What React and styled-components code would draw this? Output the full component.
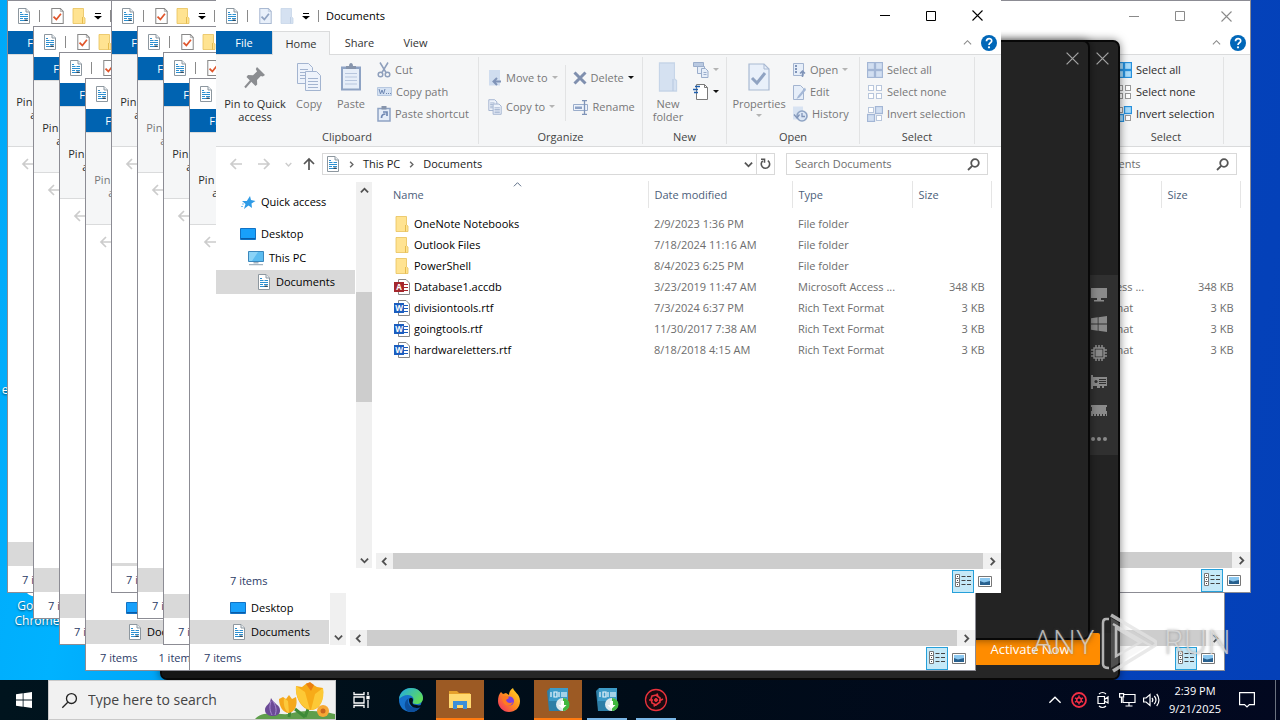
import React from "react";
import styled, { createGlobalStyle, css } from "styled-components";

const GlobalStyle = createGlobalStyle`
  * {
    box-sizing: border-box;
  }
  body {
    margin: 0;
    overflow: hidden;
    font-family: "Open Sans", "Noto Sans", sans-serif;
    font-size: 11px;
    line-height: 16px;
    color: #1a1a1a;
  }
  button, input {
    font: inherit;
    color: inherit;
    border: 0;
    padding: 0;
    background: transparent;
  }
  svg {
    display: block;
    flex: none;
  }
`;

/* ---------- desktop ---------- */

const Screen = styled.div`
  height: 100vh;
  display: grid;
  grid-template-rows: 1fr 40px;
`;

const Desktop = styled.main`
  position: relative;
  overflow: hidden;
  background: linear-gradient(100deg, #00a8f8 0%, #00b2ff 12%, #0078e0 50%, #0442ba 88%, #0440b8 100%);
`;

const Shortcut = styled.button`
  position: absolute;
  left: ${(p) => p.$x}px;
  top: ${(p) => p.$y}px;
  width: 74px;
  display: flex;
  flex-direction: column;
  align-items: center;
  line-height: 15px;
  font-size: 12px;
  color: #fff;
  text-shadow: 0 1px 2px rgba(0, 0, 0, 0.6);
`;

/* ---------- explorer window ---------- */

const Frame = styled.section`
  position: absolute;
  left: ${(p) => p.$x}px;
  top: ${(p) => p.$y}px;
  width: 785px;
  height: ${(p) => (p.$front ? 593 : 591)}px;
  display: flex;
  flex-direction: column;
  background: #fff;
  box-shadow: ${(p) => (p.$front ? "none" : "0 0 0 1px #8c8c94")};
`;

const TitleBar = styled.header`
  height: ${(p) => (p.$front ? 31 : 30)}px;
  flex: none;
  display: flex;
  align-items: center;
  padding: 0 1px 0 9px;
`;

const QuickTools = styled.div`
  display: flex;
  align-items: center;
  gap: 8px;
`;

const Bar = styled.span`
  width: 1px;
  height: 12px;
  margin-right: ${(p) => (p.$wide ? 3 : 0)}px;
  background: #8a8a8a;
`;

const Title = styled.h1`
  margin: 0 0 0 7px;
  font-size: 11px;
  font-weight: 400;
  color: #000;
`;

const Caption = styled.div`
  margin-left: auto;
  display: flex;
`;

const CaptionButton = styled.button`
  width: 46px;
  height: 30px;
  display: grid;
  place-items: center;
  color: ${(p) => (p.$active ? "#000" : "#8a8a8a")};
`;

const Tabs = styled.nav`
  height: 24px;
  flex: none;
  display: flex;
  align-items: stretch;
  border-bottom: 1px solid #dadbdc;
`;

const Tab = styled.button`
  width: ${(p) => p.$width || 56}px;
  color: #333;
  ${(p) =>
    p.$file &&
    css`
      background: #0063b1;
      color: #fff;
    `}
  ${(p) =>
    p.$current &&
    css`
      background: #f5f6f7;
      border: 1px solid #dadbdc;
      border-bottom: 0;
      margin-bottom: -1px;
    `}
`;

const TabTools = styled.div`
  margin-left: auto;
  padding-right: 4px;
  display: flex;
  align-items: center;
  gap: 9px;
  color: #888;
`;

const Ribbon = styled.div`
  height: 92px;
  flex: none;
  display: flex;
  background: #f5f6f7;
  border-bottom: 1px solid #dadbdc;
`;

const Group = styled.div`
  width: ${(p) => p.$width}px;
  margin: 2px 0;
  border-right: 1px solid #e2e3e4;
  display: flex;
  flex-direction: column;
`;

const GroupBody = styled.div`
  flex: 1;
  min-height: 0;
  display: flex;
  padding-left: ${(p) => p.$pad || 0}px;
`;

const GroupName = styled.div`
  height: 14px;
  line-height: 14px;
  text-align: center;
  color: #444;
`;

const BigButton = styled.button`
  width: ${(p) => p.$width}px;
  padding-top: 4px;
  display: flex;
  flex-direction: column;
  align-items: center;
  align-self: flex-start;
  gap: 4px;
  line-height: 13px;
  color: ${(p) => (p.$on ? "#2b2b2b" : "#777")};
`;

const BigIcon = styled.span`
  height: 32px;
  display: grid;
  place-items: center;
`;

const Stack = styled.div`
  display: flex;
  flex-direction: column;
  padding-top: ${(p) => p.$top || 2}px;
  padding-left: ${(p) => p.$left || 0}px;
  gap: ${(p) => p.$gap || 0}px;
`;

const SmallButton = styled.button`
  height: 22px;
  display: flex;
  align-items: center;
  gap: 4px;
  white-space: nowrap;
  color: ${(p) => (p.$on ? "#2b2b2b" : "#777")};
`;

const Divider = styled.span`
  width: 1px;
  height: 56px;
  margin: 8px 0 0 7px;
  background: #e2e3e4;
`;

const AddressRow = styled.div`
  height: 34px;
  flex: none;
  display: flex;
  align-items: center;
  padding: 0 13px;
`;

const NavButton = styled.button`
  width: ${(p) => p.$width || 28}px;
  display: flex;
  margin-left: ${(p) => (p.$end ? "auto" : 0)};
  color: ${(p) => (p.$on ? "#555" : "#ccc")};
`;

const AddressBox = styled.div`
  flex: 1;
  height: 22px;
  display: flex;
  align-items: center;
  border: 1px solid #d9d9d9;
  padding-left: 3px;
  color: #1a1a1a;
`;

const Crumb = styled.a`
  color: inherit;
  text-decoration: none;
`;

const Separator = styled.span`
  width: 23px;
  display: grid;
  place-items: center;
  color: #666;
`;

const Refresh = styled.button`
  width: 18px;
  height: 20px;
  display: grid;
  place-items: center;
  border-left: 1px solid #d9d9d9;
  color: #555;
`;

const SearchBox = styled.label`
  width: 202px;
  height: 22px;
  margin-left: 11px;
  padding: 0 7px 0 8px;
  border: 1px solid #d9d9d9;
  display: flex;
  align-items: center;
  color: #555;

  input {
    flex: 1;
    min-width: 0;
    outline: 0;
  }
  input::placeholder {
    color: #6d6d6d;
    opacity: 1;
  }
`;

const Body = styled.div`
  flex: 1;
  min-height: 0;
  display: flex;
`;

const Tree = styled.nav`
  width: 139px;
  display: flex;
  flex-direction: column;
  justify-content: ${(p) => (p.$scrolled ? "flex-end" : "flex-start")};
  padding: ${(p) => (p.$scrolled ? "0 0 2px" : "9px 0 0")};
`;

const TreeItem = styled.button`
  height: 24px;
  flex: none;
  margin-bottom: ${(p) => (p.$spaced ? 8 : 0)}px;
  display: flex;
  align-items: center;
  gap: 5px;
  padding-left: ${(p) => p.$indent}px;
  background: ${(p) => (p.$selected ? "#d9d9d9" : "transparent")};
  color: #000;
`;

const RowEdge = styled.span`
  height: 3px;
  background: #d9d9d9;
`;

const VScroll = styled.div`
  width: 16px;
  margin: 1px 4px 1px 1px;
  display: grid;
  grid-template-rows: 16px 1fr 16px;
  justify-items: center;
  align-items: center;
  background: #f0f0f0;
  color: #505050;
`;

const VThumb = styled.span`
  width: 16px;
  height: 110px;
  align-self: start;
  margin-top: 94px;
  background: #cdcdcd;
`;

const ListPane = styled.div`
  flex: 1;
  min-width: 0;
  display: flex;
  flex-direction: column;
  justify-content: space-between;
`;

const FileTable = styled.table`
  width: 616px;
  table-layout: fixed;
  border-collapse: collapse;
  color: #6d6d6d;

  th {
    height: 27px;
    padding: 0 6px;
    text-align: left;
    font-weight: 400;
    color: #4c607a;
    border-right: 1px solid #e5e5e5;
  }
  td {
    height: 21px;
    padding: 0 7px 0 6px;
    white-space: nowrap;
  }
  th:first-child,
  td:first-child {
    padding-left: 17px;
  }
  td:first-child {
    color: #000;
  }
  td:last-child {
    text-align: right;
  }
  tbody::before {
    content: "";
    display: block;
    height: 5px;
  }
`;

const FileName = styled.div`
  display: flex;
  align-items: center;
  gap: 3px;
`;

const FileIcon = styled.span`
  width: 18px;
  display: grid;
  place-items: center;
`;

const SortMark = styled.span`
  float: right;
  margin: -7px 120px 0 0;
`;

const HScroll = styled.div`
  height: 16px;
  margin-top: auto;
  display: grid;
  grid-template-columns: 17px 1fr 18px;
  align-items: center;
  justify-items: center;
  background: #f0f0f0;
  color: #505050;
`;

const HThumb = styled.span`
  width: 100%;
  height: 16px;
  background: #cdcdcd;
`;

const StatusBar = styled.footer`
  height: 24px;
  flex: none;
  display: flex;
  align-items: center;
  gap: 21px;
  padding-left: 14px;
  color: #2b3a66;
`;

const ViewSwitch = styled.div`
  margin-left: auto;
  padding-right: 5px;
  display: flex;
  align-items: center;
`;

const ViewButton = styled.button`
  width: 22px;
  height: 23px;
  display: grid;
  place-items: center;
  border: 1px solid ${(p) => (p.$on ? "#26a0da" : "transparent")};
  background: ${(p) => (p.$on ? "#c5e9f8" : "transparent")};
`;

/* ---------- dark installer windows ---------- */

const DarkWindow = styled.section`
  position: absolute;
  left: ${(p) => p.$x}px;
  top: 40px;
  width: ${(p) => p.$width}px;
  height: ${(p) => p.$height}px;
  display: flex;
  flex-direction: column;
  overflow: hidden;
  background: #232323;
  border: 2px solid #080808;
  border-radius: 7px;
  box-shadow: 0 0 8px rgba(0, 0, 0, 0.5);
`;

const DarkHeader = styled.header`
  height: 32px;
  flex: none;
  display: flex;
  justify-content: flex-end;
  align-items: center;
  padding-right: 9px;
  color: #a0a0a0;
`;

const DarkBody = styled.div`
  flex: 1;
  display: flex;
  justify-content: flex-end;
  align-items: flex-start;
  padding-top: 201px;
`;

const DarkSide = styled.nav`
  width: 30px;
  height: 180px;
  padding: 12px 3px;
  display: flex;
  flex-direction: column;
  gap: 13px;
  background: #303030;
  color: #8a8a8a;
`;

const DarkFooter = styled.footer`
  height: 45px;
  display: flex;
  align-items: flex-start;
  padding-right: 18px;
  background: linear-gradient(90deg, #151515 138px, #262626 138px);
`;

const Activate = styled.button`
  width: 140px;
  height: 32px;
  margin-left: auto;
  border-radius: 2px;
  background: #ff8c00;
  color: #fff;
  font-size: 13px;
`;

const Watermark = styled.div`
  position: absolute;
  right: 49px;
  bottom: 6px;
  display: flex;
  align-items: center;
  gap: 7px;
  font-size: 33px;
  font-weight: 300;
  line-height: 64px;
  color: rgba(225, 225, 225, 0.75);
  text-shadow: 0 0 3px rgba(110, 110, 110, 0.6);
  pointer-events: none;
`;

/* ---------- taskbar ---------- */

const Taskbar = styled.footer`
  display: flex;
  background: linear-gradient(90deg, #00141e, #000c18 50%, #020820);
  color: #fff;
`;

const StartButton = styled.button`
  width: 48px;
  display: grid;
  place-items: center;
`;

const TaskSearch = styled.label`
  width: 288px;
  display: flex;
  align-items: center;
  padding-left: 12px;
  background: #f1f1f1;
  border: 1px solid #c9c9c9;
  color: #222;

  input {
    flex: 1;
    min-width: 0;
    margin-left: 10px;
    font-size: 14px;
    outline: 0;
  }
  input::placeholder {
    color: #444;
    opacity: 1;
  }
`;

const Tasks = styled.div`
  display: flex;
  gap: 1px;
`;

const TaskButton = styled.button`
  width: ${(p) => p.$width || 48}px;
  display: grid;
  place-items: center;
  background: ${(p) => (p.$alert ? "#9c5a24" : "transparent")};
  box-shadow: ${(p) => (p.$alert ? "inset 0 -2px #ff7a10" : "none")};
`;

const OpenTask = styled(TaskButton)`
  margin: 0 4px;
  width: 40px;
  box-shadow: inset 0 -2px #7ab6e6;
`;

const Tray = styled.div`
  margin-left: auto;
  display: flex;
  align-items: center;
`;

const TrayButton = styled.button`
  width: ${(p) => p.$width || 24}px;
  height: 40px;
  display: grid;
  place-items: center;
`;

const Clock = styled.time`
  width: 64px;
  text-align: center;
  line-height: 18px;
`;

const ShowDesktop = styled.button`
  width: 5px;
  height: 40px;
  margin-left: 8px;
  border-left: 1px solid #6b7280;
`;

/* ---------- icons ---------- */

const DocIcon = () => (
  <svg width="14" height="16" viewBox="0 0 14 16">
    <path d="M1.500.500h7.500l3.500 3.500v11.500h-11z" fill="#fff" stroke="#8d979f" />
    <path d="M9 .500v3.500h3.500" fill="#e8edf2" stroke="#8d979f" />
    <path d="M3 4.500h2M3 6.500h3.500M7.500 6.500h3.500M3 8.500h8M3 10.500h3M7 10.500h4M3 12.500h8" stroke="#2b8fd0" strokeWidth="1.200" />
    <path d="M7.500 11.500h3v1.500h-3z" fill="#344b5e" />
  </svg>
);

const CheckDoc = ({ on, big }) => (
  <svg width={big ? 22 : 13} height={big ? 28 : 16} viewBox="0 0 22 28">
    <path d="M1 1h15l5 5v21H1z" fill={on ? "#fff" : "#e9f0fa"} stroke={on ? "#888" : "#a9b9d2"} strokeWidth={big ? 1.200 : 1.800} />
    <path d="M16 1v5h5" fill="none" stroke={on ? "#888" : "#a9b9d2"} />
    <path d="M4 15l5 5 8-10" fill="none" stroke={on ? "#e0562c" : "#90a3c2"} strokeWidth="3" />
  </svg>
);

const FolderIcon = ({ tone = "yellow", big }) => {
  const blue = tone === "blue";
  return (
    <svg width={big ? 20 : 14} height={big ? 30 : 16} viewBox="0 0 14 16" preserveAspectRatio="none">
      <path d="M1 .5h10.500v8.500l1.500 1v5.500H1z" fill={blue ? "#d5e1f1" : "#ffe391"} stroke={blue ? "#c6d5e8" : "#e8c25a"} strokeWidth=".8" />
      <path d="M10.500 9v6.500" stroke={blue ? "#bacbe2" : "#e0b23c"} strokeWidth=".8" />
    </svg>
  );
};

const Caret = ({ on }) => (
  <svg width="6" height="4" viewBox="0 0 6 4">
    <path d="M0 0h6l-3 3z" fill={on ? "#111" : "#b4b4b4"} />
  </svg>
);

const ToolbarCaret = () => (
  <svg width="8" height="8" viewBox="0 0 8 8">
    <path d="M1 1h6v1H1zM0 4h8L4 7.500z" fill="#000" />
  </svg>
);

const Chevron = ({ turn = 0, size = 9, width = 2 }) => (
  <svg width={size} height={size} viewBox="0 0 10 10">
    <path d="M1 3l4 4 4-4" fill="none" stroke="currentColor" strokeWidth={width} transform={`rotate(${turn} 5 5)`} />
  </svg>
);

const Arrow = ({ turn = 0 }) => (
  <svg width="14" height="14" viewBox="0 0 14 14">
    <path d="M13 7H2M7 2L2 7l5 5" fill="none" stroke="currentColor" strokeWidth="1.700" transform={`rotate(${turn} 7 7)`} />
  </svg>
);

const CloseIcon = ({ size = 11 }) => (
  <svg width={size} height={size} viewBox="0 0 11 11">
    <path d="M.5.5l10 10M10.500.500l-10 10" stroke="currentColor" strokeWidth="1.100" />
  </svg>
);

const HelpIcon = () => (
  <svg width="16" height="16" viewBox="0 0 16 16">
    <circle cx="8" cy="8" r="8" fill="#0067b8" />
    <path d="M5.500 6.200c0-3.600 5.200-3.400 5.200-.3C10.700 7.800 8 7.800 8 10" fill="none" stroke="#fff" strokeWidth="1.700" />
    <circle cx="8" cy="12.300" r="1.100" fill="#fff" />
  </svg>
);

const PinIcon = () => (
  <svg width="24" height="28" viewBox="0 0 24 28">
    <path d="M14 4l8 8-2.200 1.500-2-.5-3.800 4 .2 4.500-1.700 1.500-9-9L5 12l5 .3L14 8.500l-1.200-2.500z" fill="#8b8d91" />
    <path d="M8.500 17L2 24.500" stroke="#8b8d91" strokeWidth="2" />
  </svg>
);

const CopyIcon = ({ small }) => (
  <svg width={small ? 14 : 26} height={small ? 16 : 28} viewBox="0 0 26 28">
    <g fill="#eef3fb" stroke="#a3b4d0" strokeWidth={small ? 1.800 : 1}>
      <path d="M1.500.500h11l4 4v16h-15z" />
      <path d="M4 6.500h8M4 9.500h5M4 12.500h5M4 15.500h5" />
      <path d="M9.500 8.500h11l4 4v15h-15z" />
      <path d="M12 15.500h10M12 18.500h10M12 21.500h10M12 24.500h10" />
    </g>
  </svg>
);

const PasteIcon = () => (
  <svg width="22" height="30" viewBox="0 0 22 30">
    <path d="M1 4.500h20v24H1z" fill="#8ea3c4" />
    <path d="M3 7h16v19.500H3z" fill="#e6eef9" />
    <path d="M5 11.500h12M5 15h12M5 18.500h12M5 22h12" stroke="#b7c6de" />
    <path d="M6 7V4h3c0-4 4-4 4 0h3v3z" fill="#8795ac" />
  </svg>
);

const CutIcon = () => (
  <svg width="14" height="16" viewBox="0 0 14 16" fill="none" stroke="#8e9fbc" strokeWidth="1.500">
    <path d="M3 .5l6 10M11 .5l-6 10" />
    <circle cx="3.500" cy="12.500" r="2.300" />
    <circle cx="10.500" cy="12.500" r="2.300" />
  </svg>
);

const PathIcon = () => (
  <svg width="15" height="10" viewBox="0 0 15 10">
    <path d="M.5.5h14v8H.5z" fill="#d5e2f3" stroke="#b7c8e0" />
    <path d="M2 2l1.500 5L5 3l1.500 4L8 2M9 6.500h1M11 6.500h1M13 6.500h1" fill="none" stroke="#6f88b3" />
  </svg>
);

const ShortcutIcon = () => (
  <svg width="14" height="16" viewBox="0 0 14 16">
    <path d="M1 2.500h12v12.500H1z" fill="#e6eef9" stroke="#8ea3c4" strokeWidth="1.500" />
    <path d="M4.500 0h5v3.500h-5z" fill="#8795ac" />
    <path d="M4.500 12c0-3 1-4 4-4M6 6h4v4" fill="none" stroke="#6f88b3" strokeWidth="1.700" />
  </svg>
);

const MoveIcon = () => (
  <svg width="14" height="16" viewBox="0 0 14 16">
    <path d="M1 0h11v15.500H1z" fill="#d0ddef" />
    <path d="M13 11.500H6M9 8l-3.500 3.500L9 15" fill="none" stroke="#8094b8" strokeWidth="2" />
  </svg>
);

const DeleteIcon = () => (
  <svg width="14" height="14" viewBox="0 0 14 14">
    <path d="M1.500 1.500l11 11M12.500 1.500l-11 11" stroke="#7f8fae" strokeWidth="3" />
  </svg>
);

const RenameIcon = () => (
  <svg width="16" height="15" viewBox="0 0 16 15">
    <path d="M.5 4.500h14v6H.5z" fill="#eef3fb" stroke="#9aadcb" />
    <path d="M2 6.500h7v2.500H2z" fill="#8da2c6" />
    <path d="M9 .5h5M9 14.500h5M11.500.500v14" stroke="#7f94b8" strokeWidth="1.300" />
  </svg>
);

const EasyIcon = () => (
  <svg width="16" height="16" viewBox="0 0 16 16" fill="#e6eef9" stroke="#9aadcb">
    <path d="M.5.5h10v4H.5z" fill="#b9c9e1" />
    <path d="M4.500 4.500h7v7h-7z" />
    <path d="M8.500 6.500h4l2.500 2.500v6.500H8.500zM10.500 10.500h3M10.500 12.500h3" />
  </svg>
);

const NewItemIcon = () => (
  <svg width="16" height="16" viewBox="0 0 16 16">
    <path d="M3.500.500h8l3 3v12h-11z" fill="#fff" stroke="#7a7a7a" />
    <path d="M11.500.500v3h3" fill="none" stroke="#7a7a7a" />
    <path d="M2 2.500h5M0 5.500h5M1 8.500h4" stroke="#1f5fae" strokeWidth="1.500" />
  </svg>
);

const OpenIcon = () => (
  <svg width="14" height="16" viewBox="0 0 14 16">
    <path d="M1.500 1.500h10v12h-10z" fill="#e6eef9" stroke="#a3b4d0" />
    <path d="M3 4h2M3 7h2M3 10h2" stroke="#8094b8" strokeWidth="2" />
    <path d="M10.500 15V9.500M8 11.500l2.500-2.500 2.500 2.500" fill="none" stroke="#8094b8" strokeWidth="1.500" />
  </svg>
);

const EditIcon = () => (
  <svg width="14" height="16" viewBox="0 0 14 16">
    <path d="M1.500 1.500h7l3 3v11h-10z" fill="#e6eef9" stroke="#a3b4d0" />
    <path d="M13 3.500l-7 8.500-1.500 3 3-1.500L14 6z" fill="#a5b8d6" />
  </svg>
);

const HistoryIcon = () => (
  <svg width="16" height="16" viewBox="0 0 16 16">
    <path d="M1 .5h10v13H1z" fill="#d8e3f2" />
    <circle cx="10" cy="10" r="5" fill="#dbe6f5" stroke="#8ea3c4" strokeWidth="1.600" />
    <path d="M10 7v3.500h3M2 8.500l3 3.500 2.500-3.500" fill="none" stroke="#8094b8" strokeWidth="1.300" />
  </svg>
);

const SelectIcon = ({ kind, on }) => {
  const line = on ? "#2690dc" : "#a3b6d5";
  const fill = on ? "#a8dcfb" : "#d2dff1";
  const blank = on ? "#999" : "#b8c6dc";
  const cells = [[0, 0], [1, 0], [0, 1], [1, 1]];
  return (
    <svg width="16" height="16" viewBox="0 0 16 16">
      {cells.map(([cx, cy]) => {
        const chosen = kind === "all" || (kind === "invert" && cx !== cy);
        const size = chosen ? 7 : 5;
        return (
          <rect
            key={`${cx}${cy}`}
            x={cx * 8 + (chosen ? 0.5 : 1.5)}
            y={cy * 8 + (chosen ? 0.5 : 1.5)}
            width={size}
            height={size}
            fill={chosen ? fill : "#fff"}
            stroke={chosen ? line : blank}
            strokeWidth={chosen ? 1.3 : 1}
          />
        );
      })}
    </svg>
  );
};

const RefreshIcon = () => (
  <svg width="11" height="12" viewBox="0 0 11 12" fill="none" stroke="currentColor" strokeWidth="1.600">
    <path d="M7.800 2.600a4.200 4.200 0 1 1-5 .2M1 1.200h3.500v3.500" />
  </svg>
);

const MagnifierIcon = ({ size = 13, width = 1.8 }) => (
  <svg width={size} height={size} viewBox="0 0 13 13" fill="none" stroke="currentColor" strokeWidth={width}>
    <circle cx="8" cy="5" r="3.800" />
    <path d="M5.200 7.800L1 12" />
  </svg>
);

const StarIcon = () => (
  <svg width="15" height="15" viewBox="0 0 15 15">
    <path d="M9 1l1 4 4.500 1-4 2.500.5 4.500-3.500-2.500L3 14l1.500-5L1 6h4.800z" fill="#2f9be6" />
    <path d="M1 9h2M0 11.500h2" stroke="#7cc0ee" />
  </svg>
);

const DesktopIcon = () => (
  <svg width="16" height="13" viewBox="0 0 16 13">
    <path d="M.5.5h15v11H.5z" fill="#18a0fb" stroke="#1272c4" />
    <path d="M1 10.500h14" stroke="#0a5ca8" />
  </svg>
);

const PcIcon = () => (
  <svg width="16" height="15" viewBox="0 0 16 15">
    <path d="M.5.5h15v10H.5z" fill="#5bbcf0" stroke="#3b87bc" />
    <path d="M1 1h9L4 10H1z" fill="#8ad3f7" />
    <path d="M5.500 11h5v1.500h-5zM1 13h14v1.300H1z" fill="#a3b3c0" />
  </svg>
);

const OfficeIcon = ({ color, letter }) => (
  <svg width="16" height="16" viewBox="0 0 16 16">
    <path d="M4.500.500H12l3.500 3.500v11.500h-11z" fill="#fff" stroke="#888" />
    <path d="M10 5.500h4M10 8.500h4M10 11.500h4" stroke={color} />
    <path d="M0 3h10v10H0z" fill={color} />
    <text x="5" y="11" textAnchor="middle" fontFamily="Open Sans, sans-serif" fontSize="8" fontWeight="700" fill="#fff">
      {letter}
    </text>
  </svg>
);

const DetailsIcon = () => (
  <svg width="17" height="14" viewBox="0 0 17 14">
    <path d="M.5.5h4v4h-4zM.5 4.500h4v4h-4zM.5 8.500h4v4h-4z" fill="#fff" stroke="#777" />
    <path d="M2 2.500h1M2 6.500h1M2 10.500h1M6.500 2.500h4M12 2.500h4M6.500 6.500h4M12 6.500h4M6.500 10.500h4M12 10.500h4" stroke="#444" />
  </svg>
);

const ThumbIcon = () => (
  <svg width="14" height="11" viewBox="0 0 14 11">
    <path d="M.5.5h13v10H.5z" fill="#fff" stroke="#777" />
    <path d="M2 2h10v7H2z" fill="#8cc8f0" />
    <path d="M2 5l4 1.500L12 5v4H2z" fill="#28608e" />
  </svg>
);

const WindowsIcon = () => (
  <svg width="16" height="16" viewBox="0 0 16 16" fill="currentColor">
    <path d="M0 2.300L6.700 1.300V7.600H0zM7.500 1.200L16 0v7.600H7.500zM0 8.400h6.700v6.300L0 13.700zM7.500 8.400H16V16l-8.500-1.200z" />
  </svg>
);

const MonitorIcon = () => (
  <svg width="16" height="16" viewBox="0 0 16 16" fill="currentColor">
    <path d="M0 1h16v10H0zM6 11h4v2h3v1.500H3V13h3z" />
  </svg>
);

const ChipIcon = () => (
  <svg width="16" height="16" viewBox="0 0 16 16">
    <path d="M3 3h10v10H3z" fill="none" stroke="currentColor" strokeWidth="1.500" />
    <path d="M4.500 4.500h7v7h-7z" fill="currentColor" />
    <path d="M5 0v3M8 0v3M11 0v3M5 13v3M8 13v3M11 13v3M0 5h3M0 8h3M0 11h3M13 5h3M13 8h3M13 11h3" stroke="currentColor" strokeWidth="1.500" />
  </svg>
);

const CardIcon = () => (
  <svg width="16" height="16" viewBox="0 0 16 16">
    <path d="M0 1h2v2h14v9h-3v2h-2v-2H9v2H6v-2H2v3H0z" fill="currentColor" />
    <path d="M8 5.500h7M8 7.500h7M8 9.500h7" stroke="#303030" />
    <circle cx="5" cy="7.500" r="1.600" fill="#303030" />
  </svg>
);

const RamIcon = () => (
  <svg width="16" height="16" viewBox="0 0 16 16" fill="currentColor">
    <path d="M0 2h16v2h-1v4h1v5h-1v-2h-1v2h-2v-2h-1v2H9v-2H8v2H6v-2H5v2H3v-2H2v2H0V8h1V4H0z" />
  </svg>
);

const DotsIcon = () => (
  <svg width="16" height="16" viewBox="0 0 16 16" fill="currentColor">
    <circle cx="2" cy="7" r="2" />
    <circle cx="8" cy="7" r="2" />
    <circle cx="14" cy="7" r="2" />
  </svg>
);

const PlayMark = () => (
  <svg width="56" height="64" viewBox="0 0 56 64" fill="none" stroke="currentColor" strokeWidth="3.500">
    <path d="M10 5L53 30.500c3 2 3 4 0 5.500L12 61" />
    <path d="M15 18v28l24-13.500zM8 9H5c-3 0-3 2-3 4v41c0 4 4 4 6 4M12 14L52 37" strokeWidth="2.500" />
    <path d="M10 8v50l42-25z" fill="currentColor" opacity=".3" stroke="none" />
  </svg>
);

const ChromeIcon = () => (
  <svg width="32" height="32" viewBox="0 0 32 32">
    <circle cx="16" cy="16" r="15" fill="#fff" />
    <path d="M16 16l8 13A15 15 0 0 1 14 31z" fill="#1a9c52" />
    <circle cx="16" cy="16" r="6" fill="#3b7df0" />
  </svg>
);

const Flowers = () => (
  <svg width="80" height="38" viewBox="0 0 80 38">
    <path d="M0 38c8-9 22-4 34-5 12-5 34-3 46 0v5z" fill="#5f9e4c" />
    <path d="M34 36l2-12M50 36l6-16M50 36l-10-8" stroke="#3e8a38" strokeWidth="3" />
    <path d="M10 29c0-5 5-5 6-12 3 6 9 7 9 12 1 8-15 8-15 0z" fill="#6b4a96" />
    <path d="M16 20c-2 6-1 10 1 14M18 20c3 5 4 9 2 14" stroke="#a88bd0" fill="none" />
    <path d="M24 18l4-2 3 2 3-4 3 4 4-2c2 8-1 15-7 16-6 0-10-7-10-14z" fill="#f5a81c" />
    <path d="M29 17l4 3 1 12c-4-2-6-8-5-15z" fill="#fcc93c" />
    <path d="M41 5l6 1 5-4 5 1 5 3 6 1c1 12-3 22-12 22-9 0-16-12-15-24z" fill="#f7ab18" />
    <path d="M41 5l9 6 5 18C46 26 40 16 41 5zM68 7l-8 6-4 16c9-1 14-10 12-22z" fill="#fdc936" />
    <path d="M51 3l4-2 4 3-3 6z" fill="#ea7f10" />
    <circle cx="68" cy="30" r="6" fill="#f7a735" />
    <circle cx="68" cy="30" r="2.500" fill="#c9661e" />
  </svg>
);

const TaskViewIcon = () => (
  <svg width="17" height="16" viewBox="0 0 17 16" fill="none" stroke="currentColor" strokeWidth="1.300">
    <path d="M1 0v2.500h10V0M1 16v-2.500h10V16M1 5h10v6H1zM15 0v3M15 8v8" />
    <path d="M14 4.500h2v2h-2z" fill="currentColor" />
  </svg>
);

const EdgeIcon = () => (
  <svg width="24" height="24" viewBox="0 0 24 24">
    <defs>
      <linearGradient id="edge-top" x1="0" y1="0" x2="1" y2="0.6">
        <stop offset="0" stopColor="#1fa8e8" />
        <stop offset="1" stopColor="#5fdc5a" />
      </linearGradient>
    </defs>
    <path d="M0 12C0 5 5 0 12 0c7 0 12 5 12 10l-3 9c-2 3-5 5-9 5C5 24 0 19 0 12z" fill="#1672cc" />
    <path d="M0 11C1 4 6 0 12 0c7 0 12 5 12 10 0 4-3 6-6.500 6-3 0-4-1-3.500-2 2-4-1-7-5-7-4 0-7 2-9 4z" fill="url(#edge-top)" />
    <path d="M9 13c0 6 6 8 13 5-2 4-6 6-10 6C7 24 5 19 6 15c1-4 4-5 6-5-2 0-3 1-3 3z" fill="#0d4f9c" />
    <path d="M10 12c0-3 4-3 4 0l-.5 3c0 1 2 2 4 2 3 1 5 0 6.500-1l-2 3c-6 3-12-1-12-7z" fill="#02101c" />
  </svg>
);

const ExplorerIcon = () => (
  <svg width="22" height="20" viewBox="0 0 22 20">
    <path d="M0 1h8l2 2h11v6H0z" fill="#e6a12c" />
    <path d="M0 4h22v14H0z" fill="#ffd970" />
    <path d="M4 11h14v8h-4v-4H8v4H4z" fill="#3d8fd8" />
  </svg>
);

const FirefoxIcon = () => (
  <svg width="24" height="24" viewBox="0 0 24 24">
    <defs>
      <linearGradient id="fox" x1="1" y1="0" x2="0" y2="1">
        <stop offset="0" stopColor="#ffe226" />
        <stop offset=".5" stopColor="#ff8a1e" />
        <stop offset="1" stopColor="#f0246e" />
      </linearGradient>
    </defs>
    <path d="M4 4l2 2 3-1 3 2c0-3 1-5 4-7 1 4 7 6 7 13s-5 11-11 11S1 19 1 13c0-4 1-7 3-9z" fill="url(#fox)" />
    <circle cx="12.500" cy="13" r="4.500" fill="#7a3fe0" />
    <path d="M5 9c3-2 6-1 7 1l-3 2c1 3 4 4 7 2-2 6-11 5-11-5z" fill="#ff7a22" />
  </svg>
);

const IobitIcon = () => (
  <svg width="24" height="24" viewBox="0 0 24 24">
    <path d="M1 3l3-3h18l-1 21-3 2H3z" fill="#2d7ea6" />
    <path d="M4 0h18v13H3z" fill="#3d9bc8" />
    <path d="M5 4v5M8 4h3v5H8zM13 4v5M16 4v5M18 4v5M20 4v5" stroke="#e9f6fc" fill="none" strokeWidth="1.200" />
    <circle cx="16.500" cy="16.500" r="6.500" fill="#dfe9ec" />
    <path d="M17 10a6.500 6.500 0 0 1 0 13z" fill="#41b83f" />
    <path d="M15 13h3v4h2.500L16.500 21 12.500 17H15z" fill="#fff" />
  </svg>
);

const RedIcon = () => (
  <svg width="24" height="24" viewBox="0 0 24 24" fill="none" stroke="#e8323c">
    <circle cx="12" cy="12" r="10.500" fill="#1a0a10" strokeWidth="1.300" />
    <path d="M8 8l4-1 4 3v4l-4 3-4-2-1-4zM5 12h4M13 5.500l1 3M10 18.500l1-3M15 13l4-2" strokeWidth="1.600" />
    <circle cx="12" cy="12" r="1.500" fill="#e8323c" />
  </svg>
);

const TrayRed = () => (
  <svg width="16" height="16" viewBox="0 0 16 16">
    <circle cx="8" cy="8" r="7" fill="none" stroke="#f02f45" strokeWidth="1.800" />
    <circle cx="8" cy="8" r="2.300" fill="none" stroke="#f02f45" strokeWidth="1.600" />
    <path d="M8 3.500v2M8 10.500v2M4 5.800l1.700 1M10.300 9.200l1.700 1M4 10.200l1.700-1M10.300 6.800l1.700-1" stroke="#f02f45" strokeWidth="1.500" />
  </svg>
);

const MeetIcon = () => (
  <svg width="12" height="16" viewBox="0 0 12 16" fill="none" stroke="currentColor" strokeWidth="1.200">
    <path d="M1 4.500h6.500v7H1zM7.500 7.500L11 5v6L7.500 9M2 2c2-1.800 5-1.800 7 0M2 14c2 1.800 5 1.800 7 0" />
  </svg>
);

const NetworkIcon = () => (
  <svg width="17" height="14" viewBox="0 0 17 14" fill="none" stroke="currentColor" strokeWidth="1.200">
    <path d="M5 1.500h11v8H4V5M10 9.500v3.500M6.500 13h7M.6.600h4v3.500h-4zM2.500 4v6" />
  </svg>
);

const VolumeIcon = () => (
  <svg width="17" height="14" viewBox="0 0 17 14" fill="none" stroke="currentColor" strokeWidth="1.200">
    <path d="M.6 5h2.500L7 1.500v11L3.100 9H.6zM9 5c1 1.200 1 2.800 0 4M11.300 3c2 2.400 2 5.600 0 8M13.700 1c3 3.500 3 8.500 0 12" />
  </svg>
);

const NoticeIcon = () => (
  <svg width="16" height="16" viewBox="0 0 16 16" fill="none" stroke="currentColor" strokeWidth="1.200">
    <path d="M.6.600h14.800v12h-5L8 15l-2.500-2.400H.6z" />
  </svg>
);

/* ---------- data ---------- */

const files = [
  { name: "OneNote Notebooks", date: "2/9/2023 1:36 PM", type: "File folder", size: "", kind: "folder" },
  { name: "Outlook Files", date: "7/18/2024 11:16 AM", type: "File folder", size: "", kind: "folder" },
  { name: "PowerShell", date: "8/4/2023 6:25 PM", type: "File folder", size: "", kind: "folder" },
  { name: "Database1.accdb", date: "3/23/2019 11:47 AM", type: "Microsoft Access ...", size: "348 KB", kind: "access" },
  { name: "divisiontools.rtf", date: "7/3/2024 6:37 PM", type: "Rich Text Format", size: "3 KB", kind: "word" },
  { name: "goingtools.rtf", date: "11/30/2017 7:38 AM", type: "Rich Text Format", size: "3 KB", kind: "word" },
  { name: "hardwareletters.rtf", date: "8/18/2018 4:15 AM", type: "Rich Text Format", size: "3 KB", kind: "word" },
];

const kindIcons = {
  folder: <FolderIcon />,
  access: <OfficeIcon color="#a4262c" letter="A" />,
  word: <OfficeIcon color="#1b5dbe" letter="W" />,
};

// stacked windows, back to front; only their left edges stay uncovered
const stackedWindows = [
  { x: 8, y: 1, pin: true },
  { x: 34, y: 27, pin: true },
  { x: 60, y: 53, pin: true },
  { x: 86, y: 79, pin: false, chosen: true, treeText: true },
  { x: 112, y: 1, pin: true, rowEdge: true },
  { x: 138, y: 27, pin: false },
  { x: 164, y: 53, pin: true },
  { x: 190, y: 79, pin: true, treeText: true },
];

/* ---------- parts ---------- */

const PinButton = ({ on }) => (
  <BigButton $width={70} $on={on}>
    <BigIcon><PinIcon /></BigIcon>
    <span>Pin to Quick<br />access</span>
  </BigButton>
);

const SelectGroup = ({ enabled }) => (
  <Group $width={115}>
    <GroupBody $pad={7}>
      <Stack>
        <SmallButton $on={enabled}><SelectIcon kind="all" on={enabled} />Select all</SmallButton>
        <SmallButton $on={enabled}><SelectIcon kind="none" on={enabled} />Select none</SmallButton>
        <SmallButton $on={enabled}><SelectIcon kind="invert" on={enabled} />Invert selection</SmallButton>
      </Stack>
    </GroupBody>
    <GroupName>Select</GroupName>
  </Group>
);

const FullRibbon = () => (
  <Ribbon>
    <Group $width={263}>
      <GroupBody $pad={4}>
        <PinButton on />
        <BigButton $width={38}>
          <BigIcon><CopyIcon /></BigIcon>
          Copy
        </BigButton>
        <BigButton $width={46}>
          <BigIcon><PasteIcon /></BigIcon>
          Paste
        </BigButton>
        <Stack $left={3}>
          <SmallButton><CutIcon />Cut</SmallButton>
          <SmallButton><PathIcon />Copy path</SmallButton>
          <SmallButton><ShortcutIcon />Paste shortcut</SmallButton>
        </Stack>
      </GroupBody>
      <GroupName>Clipboard</GroupName>
    </Group>
    <Group $width={164}>
      <GroupBody $pad={9}>
        <Stack $top={10} $gap={7}>
          <SmallButton><MoveIcon />Move to<Caret /></SmallButton>
          <SmallButton><CopyIcon small />Copy to<Caret /></SmallButton>
        </Stack>
        <Divider />
        <Stack $top={10} $gap={7} $left={7}>
          <SmallButton><DeleteIcon />Delete<Caret on /></SmallButton>
          <SmallButton><RenameIcon />Rename</SmallButton>
        </Stack>
      </GroupBody>
      <GroupName>Organize</GroupName>
    </Group>
    <Group $width={84}>
      <GroupBody $pad={4}>
        <BigButton $width={42}>
          <BigIcon><FolderIcon tone="blue" big /></BigIcon>
          <span>New<br />folder</span>
        </BigButton>
        <Stack $left={4}>
          <SmallButton aria-label="Easy access"><EasyIcon /><Caret /></SmallButton>
          <SmallButton aria-label="New item"><NewItemIcon /><Caret on /></SmallButton>
        </Stack>
      </GroupBody>
      <GroupName>New</GroupName>
    </Group>
    <Group $width={133}>
      <GroupBody $pad={4}>
        <BigButton $width={56}>
          <BigIcon><CheckDoc big /></BigIcon>
          Properties
          <Caret />
        </BigButton>
        <Stack $left={5}>
          <SmallButton><OpenIcon />Open<Caret /></SmallButton>
          <SmallButton><EditIcon />Edit</SmallButton>
          <SmallButton><HistoryIcon />History</SmallButton>
        </Stack>
      </GroupBody>
      <GroupName>Open</GroupName>
    </Group>
    <SelectGroup />
  </Ribbon>
);

const Columns = () => (
  <colgroup>
    <col style={{ width: 272 }} />
    <col style={{ width: 144 }} />
    <col style={{ width: 120 }} />
    <col />
  </colgroup>
);

const FileList = () => (
  <FileTable>
    <Columns />
    <thead>
      <tr>
        <th>
          Name
          <SortMark><Chevron turn={180} width={1} /></SortMark>
        </th>
        <th>Date modified</th>
        <th>Type</th>
        <th>Size</th>
      </tr>
    </thead>
    <tbody>
      {files.map((file) => (
        <tr key={file.name}>
          <td><FileName><FileIcon>{kindIcons[file.kind]}</FileIcon>{file.name}</FileName></td>
          <td>{file.date}</td>
          <td>{file.type}</td>
          <td>{file.size}</td>
        </tr>
      ))}
    </tbody>
  </FileTable>
);

// same columns, with the covered ones left empty
const CoveredFileList = () => (
  <FileTable>
    <Columns />
    <thead>
      <tr><th /><th /><th /><th>Size</th></tr>
    </thead>
    <tbody>
      {files.map((file) => (
        <tr key={file.name}>
          <td />
          <td />
          <td>{file.size && file.type}</td>
          <td>{file.size}</td>
        </tr>
      ))}
    </tbody>
  </FileTable>
);

const WindowButtons = ({ active }) => (
  <Caption>
    <CaptionButton $active={active} aria-label="Minimize">
      <svg width="10" height="1"><path d="M0 .5h10" stroke="currentColor" /></svg>
    </CaptionButton>
    <CaptionButton $active={active} aria-label="Maximize">
      <svg width="10" height="10"><path d="M.5.5h9v9h-9z" fill="none" stroke="currentColor" /></svg>
    </CaptionButton>
    <CaptionButton $active={active} aria-label="Close"><CloseIcon /></CaptionButton>
  </Caption>
);

const QuickBar = ({ front }) => (
  <QuickTools>
    <DocIcon />
    <Bar $wide />
    <CheckDoc on={!front} />
    <FolderIcon tone={front ? "blue" : "yellow"} />
    <ToolbarCaret />
    <Bar />
  </QuickTools>
);

const Help = () => (
  <TabTools>
    <Chevron turn={180} width={1.2} />
    <HelpIcon />
  </TabTools>
);

const Search = () => (
  <SearchBox>
    <input placeholder="Search Documents" aria-label="Search Documents" />
    <MagnifierIcon />
  </SearchBox>
);

const SideScroll = () => (
  <VScroll>
    <Chevron turn={180} />
    <VThumb />
    <Chevron />
  </VScroll>
);

const BottomScroll = () => (
  <HScroll>
    <Chevron turn={90} />
    <HThumb />
    <Chevron turn={-90} />
  </HScroll>
);

const Views = () => (
  <ViewSwitch>
    <ViewButton $on aria-label="Details"><DetailsIcon /></ViewButton>
    <ViewButton aria-label="Large icons"><ThumbIcon /></ViewButton>
  </ViewSwitch>
);

const Explorer = () => (
  <Frame $x={216} $y={0} $front>
    <TitleBar $front>
      <QuickBar front />
      <Title>Documents</Title>
      <WindowButtons active />
    </TitleBar>
    <Tabs>
      <Tab $file>File</Tab>
      <Tab $current $width={58}>Home</Tab>
      <Tab $width={59}>Share</Tab>
      <Tab $width={53}>View</Tab>
      <Help />
    </Tabs>
    <FullRibbon />
    <AddressRow>
      <NavButton aria-label="Back"><Arrow /></NavButton>
      <NavButton aria-label="Forward"><Arrow turn={180} /></NavButton>
      <NavButton $width={17} aria-label="Recent"><Chevron size={7} /></NavButton>
      <NavButton $width={20} $on aria-label="Up"><Arrow turn={90} /></NavButton>
      <AddressBox>
        <DocIcon />
        <Separator><Chevron turn={-90} size={7} /></Separator>
        <Crumb href="#pc">This PC</Crumb>
        <Separator><Chevron turn={-90} size={7} /></Separator>
        <Crumb href="#documents">Documents</Crumb>
        <NavButton $on $end $width={12} aria-label="Previous locations"><Chevron /></NavButton>
        <Refresh aria-label="Refresh"><RefreshIcon /></Refresh>
      </AddressBox>
      <Search />
    </AddressRow>
    <Body>
      <Tree>
        <TreeItem $indent={25} $spaced><StarIcon />Quick access</TreeItem>
        <TreeItem $indent={24}><DesktopIcon />Desktop</TreeItem>
        <TreeItem $indent={32}><PcIcon />This PC</TreeItem>
        <TreeItem $indent={41} $selected><DocIcon />Documents</TreeItem>
      </Tree>
      <SideScroll />
      <ListPane>
        <FileList />
        <BottomScroll />
      </ListPane>
    </Body>
    <StatusBar>
      <span>7 items</span>
      <Views />
    </StatusBar>
  </Frame>
);

const StackedExplorer = ({ x, y, pin, chosen, treeText, rowEdge }) => (
  <Frame $x={x} $y={y}>
    <TitleBar><QuickBar /></TitleBar>
    <Tabs><Tab $file>File</Tab></Tabs>
    <Ribbon>
      <GroupBody $pad={4}><PinButton on={pin} /></GroupBody>
    </Ribbon>
    <AddressRow>
      <NavButton aria-label="Back"><Arrow /></NavButton>
    </AddressRow>
    <Body>
      <Tree $scrolled>
        {rowEdge ? (
          <RowEdge />
        ) : (
          <>
            <TreeItem $indent={40} aria-label="Desktop"><DesktopIcon />{treeText && "Desktop"}</TreeItem>
            <TreeItem $indent={42} $selected aria-label="Documents"><DocIcon />{treeText && "Documents"}</TreeItem>
          </>
        )}
      </Tree>
      <SideScroll />
      <ListPane><BottomScroll /></ListPane>
    </Body>
    <StatusBar>
      <span>7 items</span>
      {chosen && <span>1 item</span>}
      <Views />
    </StatusBar>
  </Frame>
);

const RightExplorer = ({ x, y, bare }) => (
  <Frame $x={x} $y={y}>
    <TitleBar><WindowButtons /></TitleBar>
    <Tabs><Help /></Tabs>
    <Ribbon>
      <Group $width={644} />
      {!bare && <SelectGroup enabled />}
    </Ribbon>
    <AddressRow>
      <AddressBox />
      {!bare && <Search />}
    </AddressRow>
    <Body>
      <ListPane>
        {!bare && <RightList><CoveredFileList /></RightList>}
        <BottomScroll />
      </ListPane>
    </Body>
    <StatusBar><Views /></StatusBar>
  </Frame>
);

const RightList = styled.div`
  padding-left: 160px;
`;

const App = () => (
  <Screen>
    <GlobalStyle />
    <Desktop>
      <Shortcut $x={-32} $y={382}>e</Shortcut>
      <Shortcut $x={0} $y={566}>
        <ChromeIcon />
        <span>Google<br />Chrome</span>
      </Shortcut>
      <RightExplorer x={439} y={79} bare />
      <RightExplorer x={465} y={1} />
      <DarkWindow $x={160} $width={960} $height={640}>
        <DarkHeader><button aria-label="Close"><CloseIcon size={13} /></button></DarkHeader>
        <DarkBody>
          <DarkSide>
            <MonitorIcon />
            <WindowsIcon />
            <ChipIcon />
            <CardIcon />
            <RamIcon />
            <DotsIcon />
          </DarkSide>
        </DarkBody>
        <DarkFooter><Activate>Activate Now</Activate></DarkFooter>
      </DarkWindow>
      <DarkWindow $x={230} $width={860} $height={600}>
        <DarkHeader><button aria-label="Close"><CloseIcon size={13} /></button></DarkHeader>
      </DarkWindow>
      {stackedWindows.map((item) => (
        <StackedExplorer key={item.x} {...item} />
      ))}
      <Explorer />
      <Watermark>
        ANY
        <PlayMark />
        RUN
      </Watermark>
    </Desktop>
    <Taskbar>
      <StartButton aria-label="Start"><WindowsIcon /></StartButton>
      <TaskSearch>
        <MagnifierIcon size={17} width={1} />
        <input placeholder="Type here to search" aria-label="Type here to search" />
        <Flowers />
      </TaskSearch>
      <Tasks>
        <TaskButton $width={50} aria-label="Task view"><TaskViewIcon /></TaskButton>
        <TaskButton aria-label="Edge"><EdgeIcon /></TaskButton>
        <TaskButton $alert aria-label="File Explorer"><ExplorerIcon /></TaskButton>
        <TaskButton aria-label="Firefox"><FirefoxIcon /></TaskButton>
        <TaskButton $alert aria-label="IObit"><IobitIcon /></TaskButton>
        <OpenTask aria-label="IObit Driver"><IobitIcon /></OpenTask>
        <OpenTask aria-label="Driver Booster"><RedIcon /></OpenTask>
      </Tasks>
      <Tray>
        <TrayButton aria-label="Hidden icons"><Chevron turn={180} size={14} width={1} /></TrayButton>
        <TrayButton aria-label="Booster"><TrayRed /></TrayButton>
        <TrayButton aria-label="Meet now"><MeetIcon /></TrayButton>
        <TrayButton aria-label="Network"><NetworkIcon /></TrayButton>
        <TrayButton aria-label="Volume"><VolumeIcon /></TrayButton>
        <Clock>2:39 PM<br />9/21/2025</Clock>
        <TrayButton $width={40} aria-label="Notifications"><NoticeIcon /></TrayButton>
        <ShowDesktop aria-label="Show desktop" />
      </Tray>
    </Taskbar>
  </Screen>
);

export default App;
